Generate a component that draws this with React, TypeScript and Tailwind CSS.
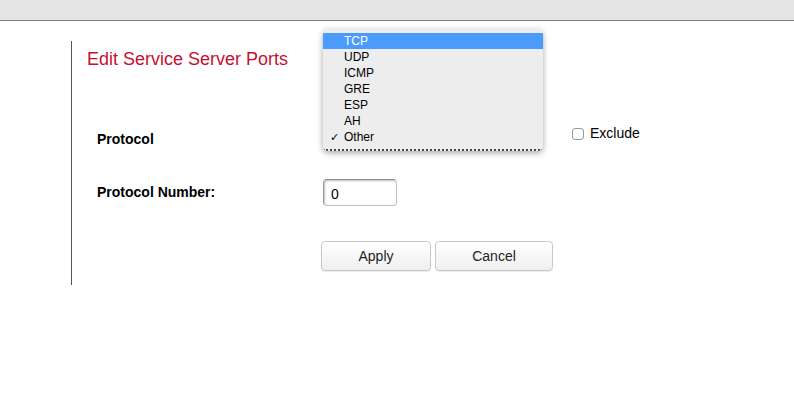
import * as React from 'react';

const options = ['TCP', 'UDP', 'ICMP', 'GRE', 'ESP', 'AH', 'Other'];

export default function App() {
  return (
    <div className="relative w-[794px] h-[397px] bg-white overflow-hidden" style={{ fontFamily: '"Liberation Sans", Arial, sans-serif' }}>
      <div className="h-[21px] bg-[#e4e4e4] border-b border-[#7d7d7d]" />

      <div className="mt-[20px] ml-[71px] h-[244px] border-l border-[#555]">
        <h1 className="pl-[15px] pt-[8px] text-[18px] leading-[21px] text-[#c4112f]">Edit Service Server Ports</h1>

        <div className="flex items-start pl-[25px] mt-[58px]">
          <div className="w-[226px] h-[22px] leading-[22px] text-[14px] font-bold text-black">Protocol</div>
          <div className="w-[220px] h-[22px]" />
          <div className="ml-[29px] h-[11px] flex items-center gap-[6px] text-[14px] text-black">
            <span className="w-[12px] h-[12px] rounded-[3px] border border-[#9a9a9a] bg-white" />
            <span>Exclude</span>
          </div>
        </div>

        <div className="flex items-center pl-[25px] mt-[29px]">
          <div className="w-[226px] text-[14px] font-bold text-black">Protocol Number:</div>
          <div className="w-[74px] h-[27px] rounded-[4px] border border-[#c4c4c4] border-t-[#8f8f8f] border-l-[#9a9a9a] shadow-[inset_1px_1px_2px_rgba(0,0,0,0.25)] pl-[7px] pt-[2px] text-[14px] leading-[25px] text-black">0</div>
        </div>

        <div className="flex gap-[4px] ml-[249px] mt-[35px]">
          <button className="w-[110px] h-[30px] rounded-[4px] border border-[#c9c9c9] bg-gradient-to-b from-white to-[#efefef] shadow-[0_1px_1px_rgba(0,0,0,0.08)] text-[14px] text-[#222]">Apply</button>
          <button className="w-[118px] h-[30px] rounded-[4px] border border-[#c9c9c9] bg-gradient-to-b from-white to-[#efefef] shadow-[0_1px_1px_rgba(0,0,0,0.08)] text-[14px] text-[#222]">Cancel</button>
        </div>
      </div>

      <div className="absolute left-[323px] top-[29px] w-[220px] h-[122px] rounded-[5px] bg-[#ededed] shadow-[0_2px_6px_rgba(0,0,0,0.35)] pt-[4px] overflow-hidden">
        {options.map((o, i) => (
          <div
            key={o}
            className={
              'relative h-[16px] leading-[17px] pl-[21px] text-[12px] ' +
              (i === 0 ? 'bg-[#4a9bfb] text-white' : 'text-black')
            }
          >
            {o === 'Other' && <span className="absolute left-[7px] top-0 text-[11px]">✓</span>}
            {o}
          </div>
        ))}
        <div className="absolute left-0 right-0 bottom-0 h-[2px] border-b-2 border-dotted border-[#444]" />
      </div>
    </div>
  );
}
